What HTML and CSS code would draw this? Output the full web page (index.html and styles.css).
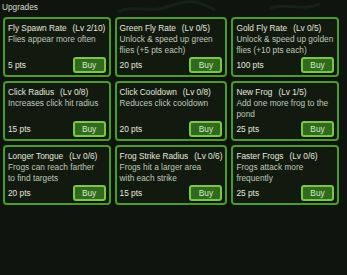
FILE: index.html
```html
<!DOCTYPE html>
<html>
<head>
<meta charset="utf-8">
<link rel="stylesheet" href="styles.css">
</head>
<body>
<div class="page">
  <svg class="deco" width="347" height="20" viewBox="0 0 347 20">
    <path d="M118 12 C135 4 150 14 170 6 S200 2 215 10" fill="none" stroke="#162118" stroke-width="3"/>
    <path d="M270 8 C285 2 300 12 320 4" fill="none" stroke="#162118" stroke-width="3"/>
  </svg>
  <h1 class="heading">Upgrades</h1>
  <div class="grid">
    <div class="card">
      <div class="title">Fly Spawn Rate<span class="lv">(Lv 2/10)</span></div>
      <div class="desc">Flies appear more often</div>
      <div class="foot"><span class="pts">5 pts</span><button class="buy">Buy</button></div>
    </div>
    <div class="card">
      <div class="title">Green Fly Rate<span class="lv">(Lv 0/5)</span></div>
      <div class="desc">Unlock &amp; speed up green<br>flies (+5 pts each)</div>
      <div class="foot"><span class="pts">20 pts</span><button class="buy">Buy</button></div>
    </div>
    <div class="card">
      <div class="title">Gold Fly Rate<span class="lv">(Lv 0/5)</span></div>
      <div class="desc">Unlock &amp; speed up golden<br>flies (+10 pts each)</div>
      <div class="foot"><span class="pts">100 pts</span><button class="buy">Buy</button></div>
    </div>
    <div class="card">
      <div class="title">Click Radius<span class="lv">(Lv 0/8)</span></div>
      <div class="desc">Increases click hit radius</div>
      <div class="foot"><span class="pts">15 pts</span><button class="buy">Buy</button></div>
    </div>
    <div class="card">
      <div class="title">Click Cooldown<span class="lv">(Lv 0/8)</span></div>
      <div class="desc">Reduces click cooldown</div>
      <div class="foot"><span class="pts">20 pts</span><button class="buy">Buy</button></div>
    </div>
    <div class="card">
      <div class="title">New Frog<span class="lv">(Lv 1/5)</span></div>
      <div class="desc">Add one more frog to the<br>pond</div>
      <div class="foot"><span class="pts">25 pts</span><button class="buy">Buy</button></div>
    </div>
    <div class="card">
      <div class="title">Longer Tongue<span class="lv">(Lv 0/6)</span></div>
      <div class="desc">Frogs can reach farther<br>to find targets</div>
      <div class="foot"><span class="pts">20 pts</span><button class="buy">Buy</button></div>
    </div>
    <div class="card">
      <div class="title">Frog Strike Radius<span class="lv">(Lv 0/6)</span></div>
      <div class="desc">Frogs hit a larger area<br>with each strike</div>
      <div class="foot"><span class="pts">15 pts</span><button class="buy">Buy</button></div>
    </div>
    <div class="card">
      <div class="title">Faster Frogs<span class="lv">(Lv 0/6)</span></div>
      <div class="desc">Frogs attack more<br>frequently</div>
      <div class="foot"><span class="pts">25 pts</span><button class="buy">Buy</button></div>
    </div>
  </div>
</div>
</body>
</html>
```
FILE: styles.css
```css
html, body {
  margin: 0;
  padding: 0;
  background: #0f140e;
}
body {
  width: 347px;
  height: 275px;
  overflow: hidden;
  font-family: "Liberation Sans", Arial, sans-serif;
  font-size: 8.3px;
  color: #c9d2c2;
}
.page {
  position: relative;
  padding: 2px 8px 0 3px;
}
.deco {
  position: absolute;
  left: 0;
  top: 0;
}
.heading {
  position: relative;
  margin: 0 0 4px -1px;
  font-size: 8.3px;
  font-weight: normal;
  line-height: 11px;
  color: #d6ddd0;
}
.grid {
  position: relative;
  display: grid;
  grid-template-columns: repeat(3, 1fr);
  grid-auto-rows: 60px;
  column-gap: 4px;
  row-gap: 4px;
}
.card {
  display: flex;
  flex-direction: column;
  border: 2px solid #4c9a2a;
  border-radius: 4px;
  background: #121a10;
  padding: 4px 3px 2px 3px;
  line-height: 11px;
}
.title {
  color: #e2e8dc;
  white-space: nowrap;
}
.lv {
  margin-left: 6px;
}
.desc {
  color: #bfc8b8;
  white-space: nowrap;
}
.foot {
  margin-top: auto;
  display: flex;
  justify-content: space-between;
  align-items: center;
}
.pts {
  color: #e2e8dc;
}
.buy {
  width: 33px;
  height: 16px;
  padding: 0;
  border: 2px solid #7fc44a;
  border-radius: 3px;
  background: #2f6a1d;
  color: #d6ecc4;
  font-family: "Liberation Sans", Arial, sans-serif;
  font-size: 8.3px;
  line-height: 11px;
}
```
